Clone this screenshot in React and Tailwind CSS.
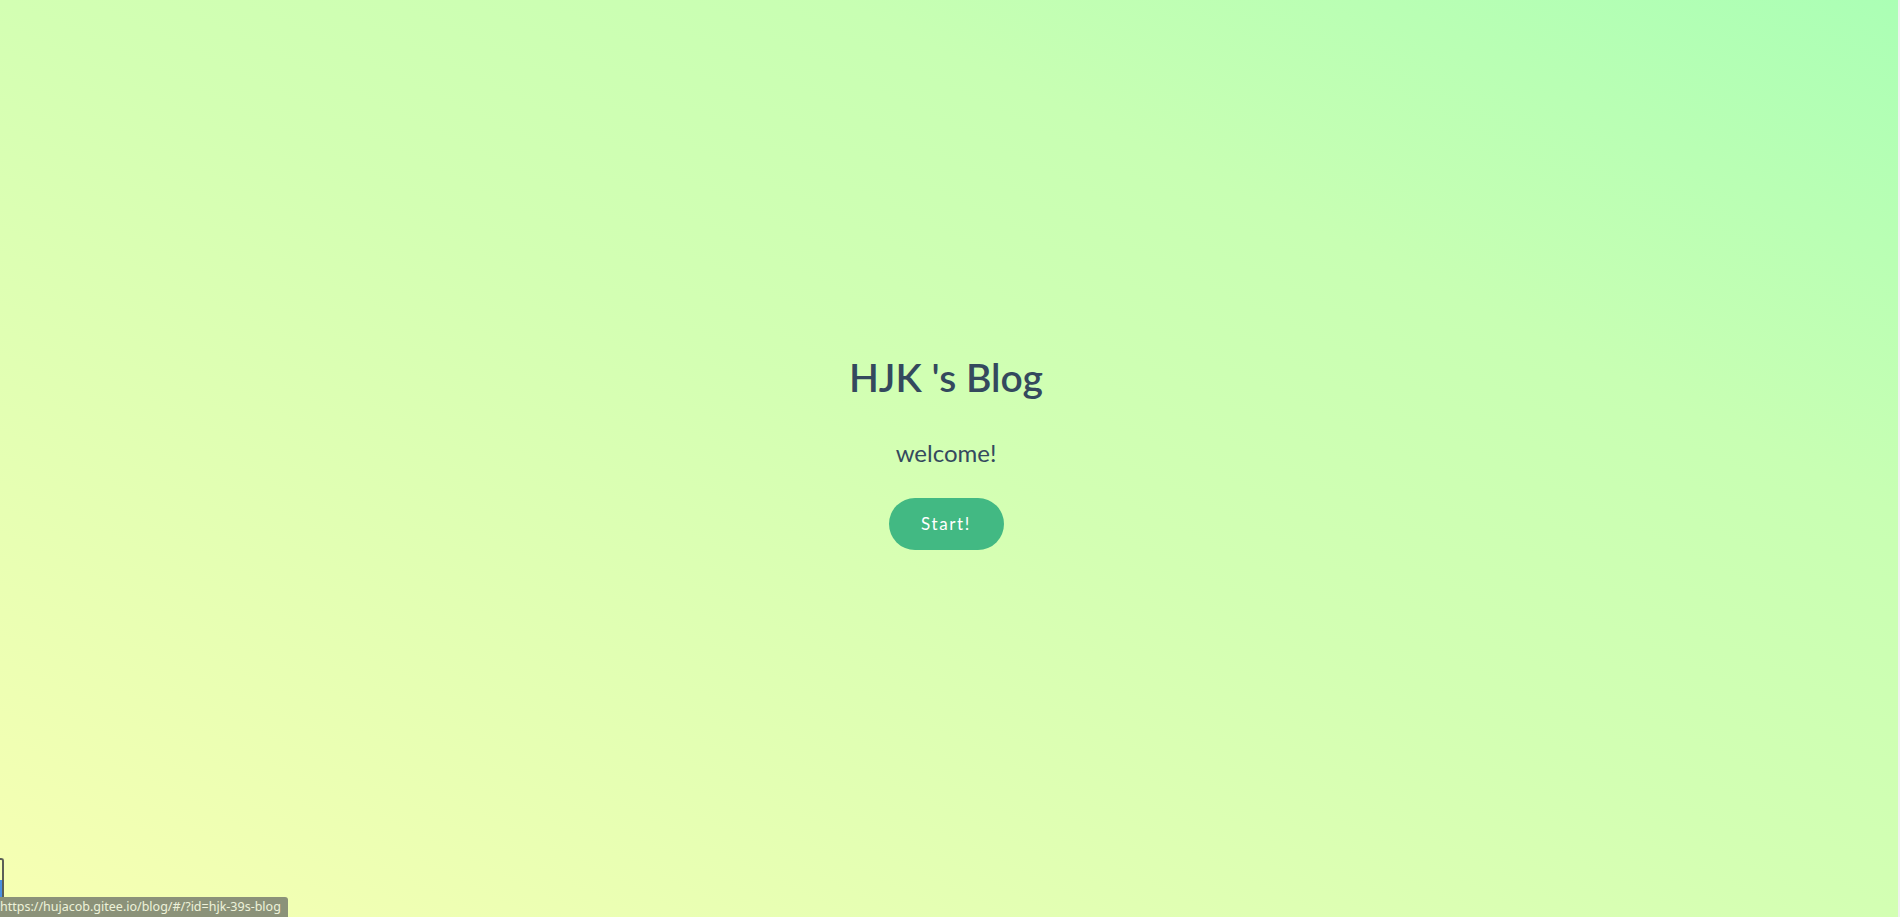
export default function App() {
  return (
    <div className="relative flex h-[917px] w-[1900px] overflow-hidden bg-[#f0f0f0]">
      <main className="flex h-full w-[1898px] flex-col items-center justify-center bg-[linear-gradient(to_left_bottom,#abffb5_0%,#c8ffb3_28%,#d3ffb3_50%,#f7ffb3_100%)] pb-[14px] pr-[6px] font-['Lato','Noto_Sans',sans-serif] text-[#34495e]">
        <h1 className="text-[39px] font-semibold leading-[48px]">HJK 's Blog</h1>
        <p className="mt-[36px] text-[24px] leading-[32px]">welcome!</p>
        <a
          href="#"
          className="mt-[29px] flex h-[52px] w-[115px] items-center justify-center rounded-full bg-[#42b983] text-[17px] tracking-[1.6px] text-white"
        >
          Start!
        </a>
      </main>

      {/* sidebar toggle peeking in at the left edge */}
      <div className="absolute bottom-[19px] left-0 h-[40px] w-[4px] rounded-tr-[3px] border-r-2 border-t-2 border-[#5b5f57]">
        <div className="mt-[20px] h-[18px] w-[2px] bg-[#4a90e2]" />
      </div>

      {/* browser status bar */}
      <div className="absolute bottom-0 left-0 flex h-[20px] w-[288px] items-center overflow-hidden rounded-tr-[3px] bg-[#8b9279] font-['Noto_Sans',sans-serif] text-[12.5px] text-[#eef2da]">
        <span className="whitespace-nowrap">https://hujacob.gitee.io/blog/#/?id=hjk-39s-blog</span>
      </div>
    </div>
  );
}
